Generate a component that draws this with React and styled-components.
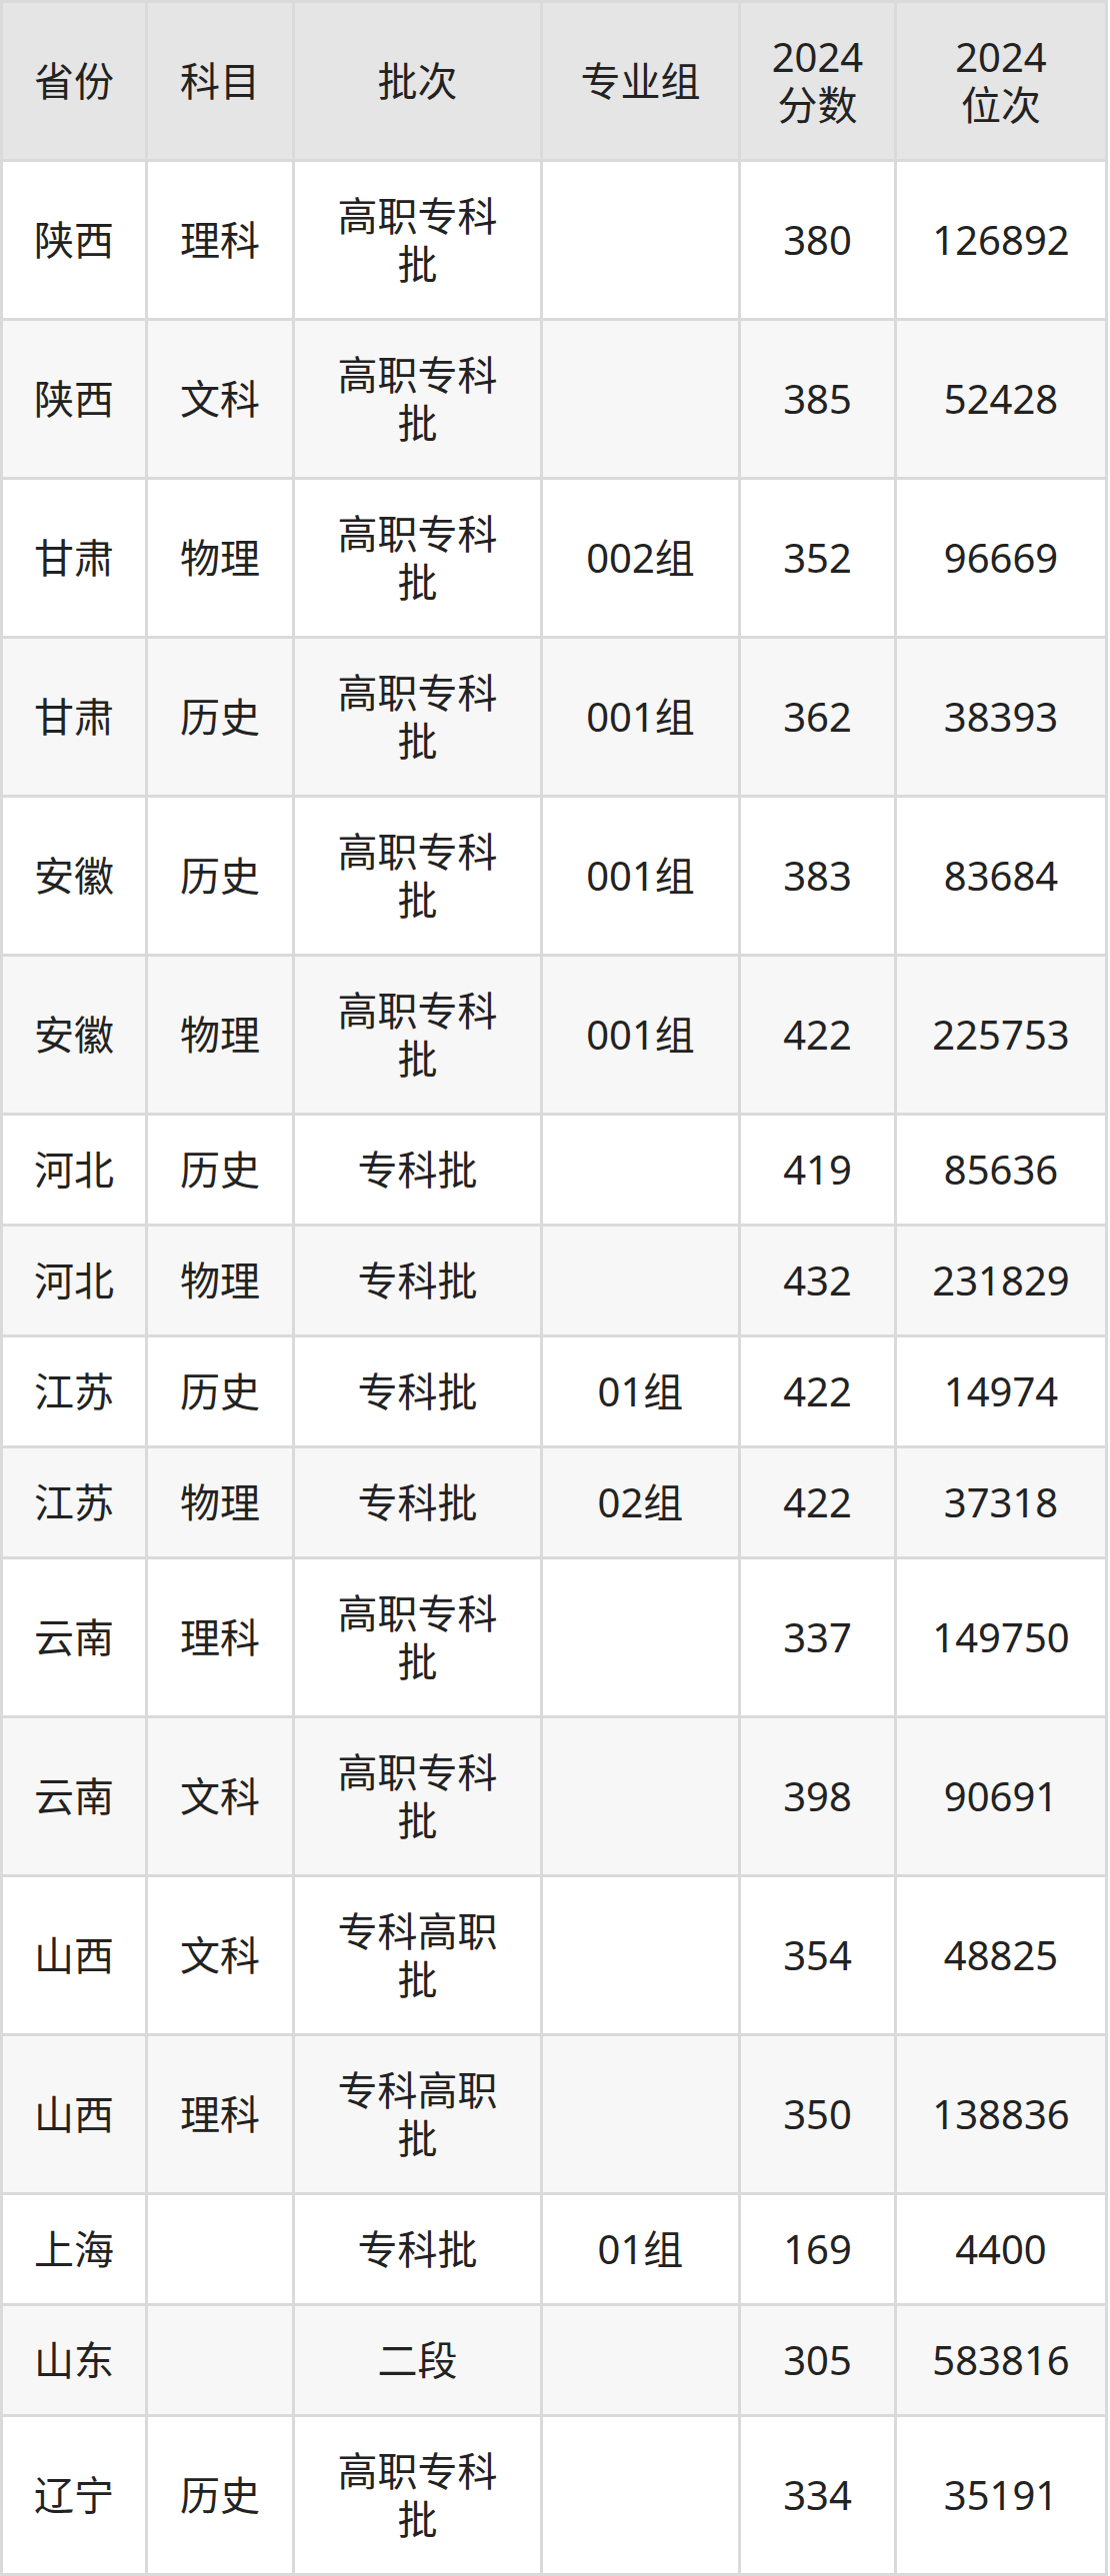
import React from "react";
import styled, { createGlobalStyle } from "styled-components";

const rows = [
  ["陕西", "理科", ["高职专科", "批"], "", "380", "126892"],
  ["陕西", "文科", ["高职专科", "批"], "", "385", "52428"],
  ["甘肃", "物理", ["高职专科", "批"], "002组", "352", "96669"],
  ["甘肃", "历史", ["高职专科", "批"], "001组", "362", "38393"],
  ["安徽", "历史", ["高职专科", "批"], "001组", "383", "83684"],
  ["安徽", "物理", ["高职专科", "批"], "001组", "422", "225753"],
  ["河北", "历史", ["专科批"], "", "419", "85636"],
  ["河北", "物理", ["专科批"], "", "432", "231829"],
  ["江苏", "历史", ["专科批"], "01组", "422", "14974"],
  ["江苏", "物理", ["专科批"], "02组", "422", "37318"],
  ["云南", "理科", ["高职专科", "批"], "", "337", "149750"],
  ["云南", "文科", ["高职专科", "批"], "", "398", "90691"],
  ["山西", "文科", ["专科高职", "批"], "", "354", "48825"],
  ["山西", "理科", ["专科高职", "批"], "", "350", "138836"],
  ["上海", "", ["专科批"], "01组", "169", "4400"],
  ["山东", "", ["二段"], "", "305", "583816"],
  ["辽宁", "历史", ["高职专科", "批"], "", "334", "35191"],
];

const widths = [145, 147, 248, 198, 156, 211];

const GlobalStyle = createGlobalStyle`
  body {
    margin: 0;
    background: #fff;
    font-family: "Noto Sans", "Noto Sans CJK SC", sans-serif;
  }
`;

const Table = styled.table`
  width: 1108px;
  table-layout: fixed;
  border-collapse: collapse;
  border: 3px solid #dadada;
  color: #222;
  font-size: 40px;
  line-height: 48px;
`;

const HeadCell = styled.th`
  background: #e5e5e5;
  border: 3px solid #dadada;
  padding: 30px 20px;
  font-weight: normal;
  text-align: center;
  vertical-align: middle;
`;

const Row = styled.tr`
  background: ${(p) => (p.$striped ? "#f7f7f7" : "#fff")};
`;

const Cell = styled.td`
  border: 3px solid #dadada;
  padding: 30px 20px;
  text-align: center;
  vertical-align: middle;
`;

const Lines = ({ parts }) =>
  parts.map((t, i) => (
    <React.Fragment key={i}>
      {i > 0 && <br />}
      {t}
    </React.Fragment>
  ));

export default function App() {
  return (
    <>
      <GlobalStyle />
      <Table>
        <colgroup>
          {widths.map((w, i) => (
            <col key={i} style={{ width: w }} />
          ))}
        </colgroup>
        <thead>
          <tr>
            <HeadCell>省份</HeadCell>
            <HeadCell>科目</HeadCell>
            <HeadCell>批次</HeadCell>
            <HeadCell>专业组</HeadCell>
            <HeadCell>
              2024
              <br />
              分数
            </HeadCell>
            <HeadCell>
              2024
              <br />
              位次
            </HeadCell>
          </tr>
        </thead>
        <tbody>
          {rows.map((r, i) => (
            <Row key={i} $striped={i % 2 === 1}>
              <Cell>{r[0]}</Cell>
              <Cell>{r[1]}</Cell>
              <Cell>
                <Lines parts={r[2]} />
              </Cell>
              <Cell>{r[3]}</Cell>
              <Cell>{r[4]}</Cell>
              <Cell>{r[5]}</Cell>
            </Row>
          ))}
        </tbody>
      </Table>
    </>
  );
}
